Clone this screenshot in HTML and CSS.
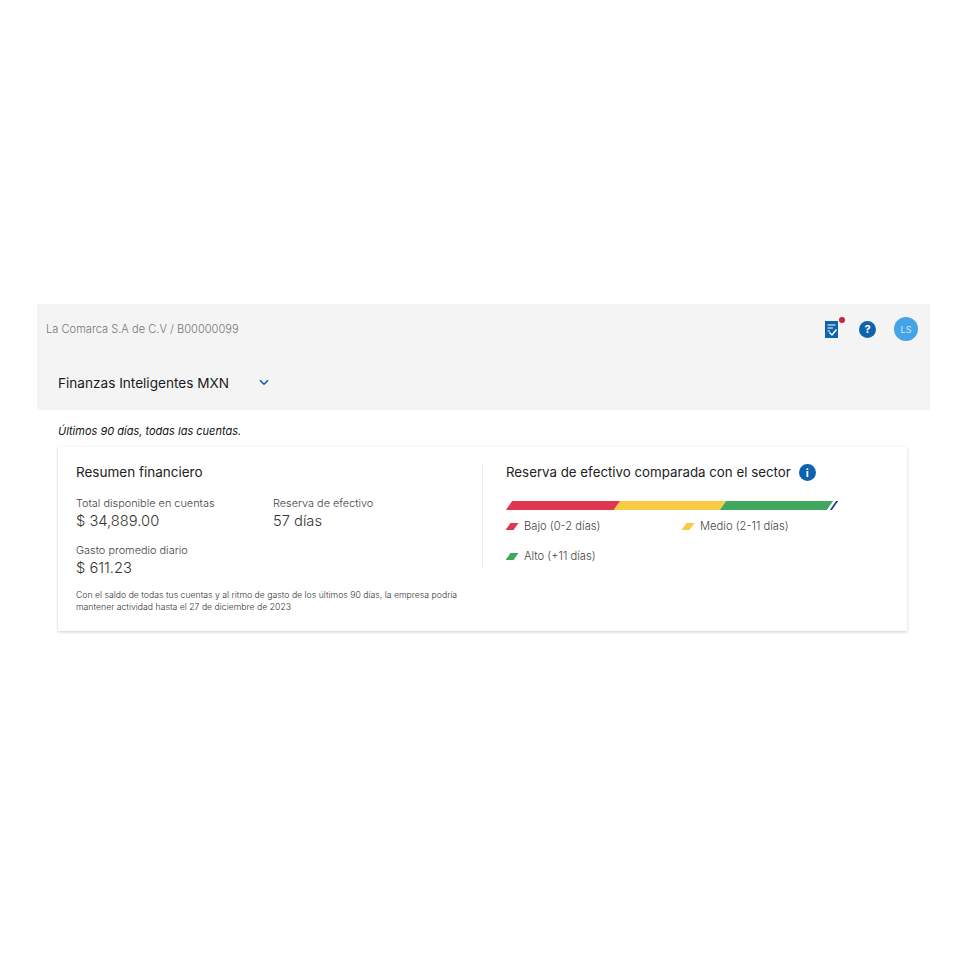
FILE: index.html
```html
<html>

<head>
	<meta charset="utf-8">
	<meta name="viewport" content="width=device-width, initial-scale=1">
	<title>Finanzas Inteligentes MXN</title>
	<link rel="stylesheet" href="styles.css">
</head>

<body>
	<div class="header">
		<div class="top-bar">
			<div class="company">La Comarca S.A de C.V / B00000099</div>
			<div class="top-icons">
				<div class="task-icon">
					<svg width="13" height="17" viewBox="0 0 13 17">
						<path d="M0 0H13V17H0Z" fill="#0f62ac" />
						<path d="M2.5 4H10.5M2.5 7H8M2.5 10H5" stroke="#fff" stroke-width="1.2" fill="none" />
						<path d="M4.5 11.5L7 14L11.5 8.5" stroke="#fff" stroke-width="1.5" fill="none" />
					</svg>
					<span class="red-dot"></span>
				</div>
				<div class="round-icon">?</div>
				<div class="avatar">LS</div>
			</div>
		</div>
		<div class="title-row">
			<div class="page-title">Finanzas Inteligentes MXN</div>
			<svg class="chevron" width="10" height="7" viewBox="0 0 10 7">
				<path d="M1 1.2L5 5.2L9 1.2" stroke="#0f5ca8" stroke-width="1.6" fill="none" />
			</svg>
		</div>
	</div>

	<div class="content">
		<div class="period">Últimos 90 días, todas las cuentas.</div>
		<div class="card">
			<div class="summary">
				<div class="card-title">Resumen financiero</div>
				<div class="stats">
					<div class="stat">
						<div class="stat-label">Total disponible en cuentas</div>
						<div class="stat-value">$ 34,889.00</div>
					</div>
					<div class="stat">
						<div class="stat-label">Reserva de efectivo</div>
						<div class="stat-value">57 días</div>
					</div>
					<div class="stat">
						<div class="stat-label">Gasto promedio diario</div>
						<div class="stat-value">$ 611.23</div>
					</div>
				</div>
				<div class="note">Con el saldo de todas tus cuentas y al ritmo de gasto de los últimos 90 días, la empresa podría mantener actividad hasta el 27 de diciembre de 2023</div>
			</div>
			<div class="reserve">
				<div class="reserve-title">
					<div class="card-title">Reserva de efectivo comparada con el sector</div>
					<div class="round-icon info">i</div>
				</div>
				<div class="bar">
					<div class="seg red"></div>
					<div class="seg yellow"></div>
					<div class="seg green"></div>
					<div class="seg marker"></div>
				</div>
				<div class="legend">
					<div class="legend-item"><span class="swatch red"></span>Bajo (0-2 días)</div>
					<div class="legend-item"><span class="swatch yellow"></span>Medio (2-11 días)</div>
					<div class="legend-item"><span class="swatch green"></span>Alto (+11 días)</div>
				</div>
			</div>
		</div>
	</div>
</body>

</html>
```

FILE: styles.css
```css
body {
	margin: 0;
	padding: 304px 30px 0 37px;
	background-color: #fff;
	color: #222;
	font-family: Inter, "Liberation Sans", sans-serif;
}

.header {
	height: 106px;
	background-color: #f4f4f4;
}

.top-bar {
	display: flex;
	justify-content: space-between;
	align-items: center;
	height: 50px;
	padding: 0 12px 0 9px;
}

.company {
	font-size: 11.1px;
	font-weight: 300;
	color: #777;
}

.top-icons {
	display: flex;
	align-items: center;
}

.task-icon {
	position: relative;
	display: flex;
	margin-right: 21px;
}

.red-dot {
	position: absolute;
	top: -4px;
	right: -7px;
	width: 6px;
	height: 6px;
	border-radius: 50%;
	background-color: #c8233f;
}

.round-icon {
	display: flex;
	justify-content: center;
	align-items: center;
	width: 17px;
	height: 17px;
	border-radius: 50%;
	background-color: #0f62ac;
	color: #fff;
	font-size: 11px;
	font-weight: 700;
}

.avatar {
	display: flex;
	justify-content: center;
	align-items: center;
	width: 24px;
	height: 24px;
	margin-left: 18px;
	border-radius: 50%;
	background-color: #45a3e8;
	color: #cfe6f8;
	font-size: 9px;
}

.title-row {
	display: flex;
	align-items: center;
	height: 56px;
	box-sizing: border-box;
	padding: 1px 0 0 21px;
}

.page-title {
	font-size: 13.6px;
	font-weight: 400;
	color: #1a1a1a;
}

.chevron {
	margin-left: 30px;
}

.content {
	padding: 0 23px 0 21px;
}

.period {
	padding: 14px 0 8px;
	font-size: 11px;
	font-style: italic;
	font-weight: 400;
	line-height: 15px;
	color: #111;
}

.card {
	display: flex;
	height: 184px;
	box-sizing: border-box;
	padding: 16px 18px 0;
	background-color: #fff;
	box-shadow: 0 1px 3px rgba(0, 0, 0, 0.2);
}

.summary {
	width: 388px;
	height: 168px;
}

.card-title {
	font-size: 13.5px;
	line-height: 19px;
	color: #222;
}

.stats {
	display: grid;
	grid-template-columns: 197px 1fr;
	row-gap: 11px;
	margin-top: 13px;
}

.stat-label {
	font-size: 10.9px;
	font-weight: 300;
	line-height: 16px;
	color: #444;
}

.stat-value {
	font-size: 14.7px;
	font-weight: 300;
	line-height: 20px;
	color: #333;
}

.note {
	margin-top: 11px;
	font-size: 8.7px;
	font-weight: 300;
	line-height: 12px;
	color: #333;
}

.reserve {
	flex: 1;
	height: 106px;
	margin-left: 18px;
	padding-left: 23px;
	border-left: 1px solid #ececec;
}

.reserve-title {
	display: flex;
	align-items: center;
	gap: 8px;
}

.reserve-title .card-title {
	font-size: 13.3px;
}

.bar {
	display: flex;
	width: 331px;
	height: 9px;
	margin-top: 19px;
}

.seg {
	transform: skewX(-35deg);
}

.seg.red {
	width: 108px;
	margin-left: 3px;
}

.seg.yellow {
	width: 106px;
}

.seg.green {
	width: 107px;
}

.seg.marker {
	width: 2px;
	margin-left: 3px;
	background-color: #0b3a8b;
}

.red {
	background-color: #e0364f;
}

.yellow {
	background-color: #fcc943;
}

.green {
	background-color: #3fa85c;
}

.legend {
	display: grid;
	grid-template-columns: 176px 1fr;
	row-gap: 14px;
	margin-top: 8px;
}

.legend-item {
	display: flex;
	align-items: center;
	font-size: 11.2px;
	font-weight: 300;
	line-height: 16px;
	color: #444;
}

.swatch {
	width: 8px;
	height: 7px;
	margin: 0 8px 0 2px;
	transform: skewX(-35deg);
}
```
